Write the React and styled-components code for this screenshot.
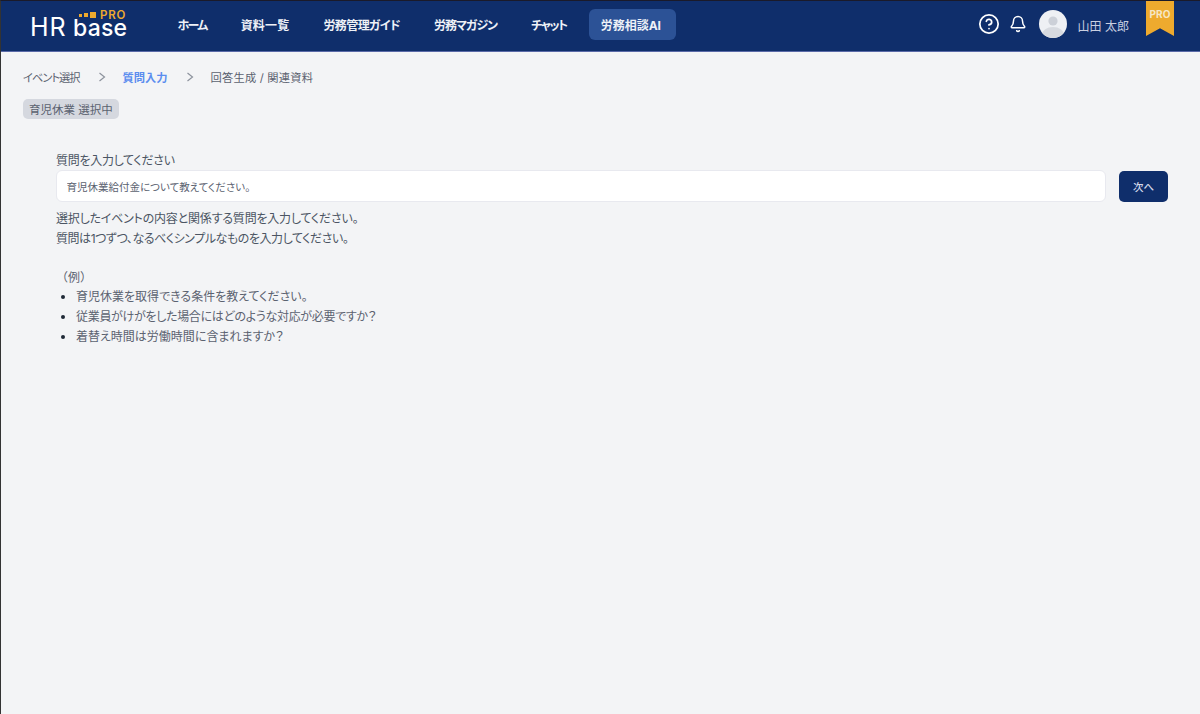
import { useState } from "react";
import styled, { createGlobalStyle } from "styled-components";
import { HelpCircle, Bell } from "lucide-react";

const Global = createGlobalStyle`
  html, body {
    margin: 0;
    padding: 0;
    background: #f3f4f6;
  }
  * { box-sizing: border-box; }
`;

const Page = styled.div`
  width: 1200px;
  height: 714px;
  overflow: hidden;
  display: flex;
  flex-direction: column;
  background: #f3f4f6;
  border-top: 1px solid #1a1a2a;
  border-left: 1px solid #333;
  font-family: Inter, "Noto Sans CJK JP", sans-serif;
  font-feature-settings: "palt";
  color: #4b5563;
`;

const Header = styled.header`
  height: 51px;
  flex: none;
  display: flex;
  align-items: center;
  background: #0f2e6b;
  border-bottom: 1px solid #5a6aa8;
  padding: 0 0 4px 29px;
`;

const Logo = styled.div`
  width: 98px;
  height: 34px;
  flex: none;
  margin-right: 38px;
  margin-top: -1px;
`;

const Nav = styled.nav`
  display: flex;
  align-items: center;
  gap: 11px;
`;

const NavItem = styled.a`
  height: 31px;
  padding: 0 ${(p) => (p.$active ? 15 : 11.5)}px 0 11.5px;
  display: flex;
  align-items: center;
  border-radius: 6px;
  font-size: 12px;
  font-weight: 700;
  letter-spacing: ${(p) => p.$tracking}px;
  color: #eef1f7;
  background: ${(p) => (p.$active ? "#2c5296" : "transparent")};
  cursor: pointer;
  white-space: nowrap;
`;

const Right = styled.div`
  margin-left: auto;
  display: flex;
  align-items: center;
  align-self: stretch;
  padding-right: 26px;
`;

const IconSlot = styled.span`
  display: flex;
  color: #fff;
  margin-right: ${(p) => p.$gap}px;
`;

const Avatar = styled.div`
  width: 28px;
  height: 28px;
  border-radius: 50%;
  overflow: hidden;
  flex: none;
  margin-right: 11px;
`;

const UserName = styled.span`
  font-size: 12px;
  color: #c9cfe0;
  margin-right: 17px;
  margin-top: 2px;
  white-space: nowrap;
`;

const Ribbon = styled.div`
  width: 28px;
  height: 35px;
  align-self: flex-start;
  background: #eeaa2e;
  clip-path: polygon(0 0, 100% 0, 100% 100%, 50% 78%, 0 100%);
  color: #f6e7c4;
  font-size: 10px;
  font-weight: 700;
  text-align: center;
  padding-top: 7px;
`;

const Main = styled.main`
  flex: 1;
  padding: 16px 32px 0 22px;
`;

const Steps = styled.ol`
  list-style: none;
  margin: 0;
  padding: 0;
  display: flex;
  align-items: center;
  height: 17px;
`;

const Step = styled.li`
  font-size: 11.25px;
  letter-spacing: ${(p) => p.$tracking || 0}px;
  color: ${(p) => (p.$current ? "#5b8def" : "#5b6270")};
  font-weight: ${(p) => (p.$current ? 700 : 400)};
  white-space: nowrap;
`;

const Chevron = styled.svg`
  width: 8px;
  height: 10px;
  margin: 0 17px 0 18px;
  color: #8c929c;
  flex: none;
`;

const Chip = styled.span`
  display: inline-flex;
  align-items: center;
  height: 20px;
  margin-top: 14px;
  padding: 0 6px;
  border-radius: 5px;
  background: #d5d8df;
  color: #5b6270;
  font-size: 11.5px;
  white-space: nowrap;
`;

const Form = styled.section`
  margin: 34px 0 0 33px;
`;

const Label = styled.label`
  display: block;
  font-size: 12px;
  line-height: 16px;
  letter-spacing: -0.3px;
  color: #4b5563;
  margin-bottom: 1px;
`;

const InputRow = styled.div`
  display: flex;
  align-items: center;
  gap: 13px;
`;

const Input = styled.input`
  flex: 1;
  height: 32px;
  padding: 0 9.5px;
  background: #fff;
  border: 1px solid #e8e9ef;
  border-radius: 6px;
  font-family: inherit;
  font-feature-settings: inherit;
  font-size: 10.5px;
  color: #5b6270;
  outline: none;
`;

const NextButton = styled.button`
  width: 49px;
  height: 31px;
  border: none;
  border-radius: 5px;
  background: #0f2e6b;
  color: #d5daea;
  font-family: inherit;
  font-size: 10.5px;
  font-weight: 500;
  cursor: pointer;
`;

const Hint = styled.div`
  margin-top: 7px;
`;

const HintLine = styled.p`
  margin: 0;
  font-size: 12px;
  line-height: 20px;
  letter-spacing: ${(p) => p.$tracking}px;
  color: #4b5563;
`;

const ExampleTitle = styled.div`
  margin-top: 19px;
  font-size: 12px;
  line-height: 20px;
  font-feature-settings: normal;
  color: #5b6270;
`;

const Examples = styled.ul`
  margin: -1px 0 0;
  padding: 0 0 0 20px;
  font-size: 12px;
  line-height: 20px;
  color: #5b6270;

  li::marker {
    color: #1f2937;
  }

  li:nth-child(2) {
    letter-spacing: -0.3px;
  }
`;

function HrBaseLogo() {
  return (
    <svg width="98" height="34" viewBox="0 -4 98 34">
      <rect x="49" y="3" width="3" height="3" fill="#eeaa2e" />
      <rect x="54" y="2" width="4" height="4" fill="#eeaa2e" />
      <rect x="60" y="1" width="6" height="6" fill="#eeaa2e" />
      <text x="70" y="7.5" fontFamily="Inter, sans-serif" fontSize="11.5" fontWeight="600" fill="#eeaa2e" letterSpacing="0.8">
        PRO
      </text>
      <text x="0" y="25" fontFamily="Inter, sans-serif" fontSize="25" fontWeight="400" fill="#fff" letterSpacing="1">
        HR
      </text>
      <text x="43" y="25" fontFamily="Inter, sans-serif" fontSize="23" fontWeight="500" fill="#fff" letterSpacing="0.2">
        base
      </text>
    </svg>
  );
}

function UserAvatar() {
  return (
    <svg width="28" height="28" viewBox="0 0 28 28">
      <rect width="28" height="28" fill="#eef0f4" />
      <circle cx="14" cy="11" r="4.6" fill="#ccd0d8" />
      <ellipse cx="14" cy="25" rx="11" ry="8" fill="#d7dae0" />
    </svg>
  );
}

// tracking squeezes the katakana-heavy labels to the reference widths
const navItems = [
  { label: "ホーム", tracking: -1.7 },
  { label: "資料一覧", tracking: 0.2 },
  { label: "労務管理ガイド", tracking: -0.6 },
  { label: "労務マガジン", tracking: -1 },
  { label: "チャット", tracking: -1.5 },
  { label: "労務相談AI", tracking: 0, active: true },
];

export default function App() {
  const [question, setQuestion] = useState("育児休業給付金について教えてください。");

  return (
    <Page>
      <Global />
      <Header>
        <Logo>
          <HrBaseLogo />
        </Logo>
        <Nav>
          {navItems.map((item) => (
            <NavItem key={item.label} $active={item.active} $tracking={item.tracking}>
              {item.label}
            </NavItem>
          ))}
        </Nav>
        <Right>
          <IconSlot $gap={9}>
            <HelpCircle size={22} strokeWidth={1.9} />
          </IconSlot>
          <IconSlot $gap={12}>
            <Bell size={18} strokeWidth={2} />
          </IconSlot>
          <Avatar>
            <UserAvatar />
          </Avatar>
          <UserName>山田 太郎</UserName>
          <Ribbon>PRO</Ribbon>
        </Right>
      </Header>
      <Main>
        <Steps>
          <Step $tracking={-1}>イベント選択</Step>
          <Chevron viewBox="0 0 8 10" fill="none" stroke="currentColor" strokeWidth="1.2">
            <path d="M1.5 1l5 4-5 4" />
          </Chevron>
          <Step $current>質問入力</Step>
          <Chevron viewBox="0 0 8 10" fill="none" stroke="currentColor" strokeWidth="1.2">
            <path d="M1.5 1l5 4-5 4" />
          </Chevron>
          <Step $tracking={0.2}>回答生成 / 関連資料</Step>
        </Steps>
        <Chip>育児休業 選択中</Chip>
        <Form>
          <Label htmlFor="question">質問を入力してください</Label>
          <InputRow>
            <Input id="question" value={question} onChange={(e) => setQuestion(e.target.value)} />
            <NextButton type="button">次へ</NextButton>
          </InputRow>
          <Hint>
            <HintLine $tracking={-0.2}>選択したイベントの内容と関係する質問を入力してください。</HintLine>
            <HintLine $tracking={-0.45}>質問は1つずつ、なるべくシンプルなものを入力してください。</HintLine>
          </Hint>
          <ExampleTitle>（例）</ExampleTitle>
          <Examples>
            <li>育児休業を取得できる条件を教えてください。</li>
            <li>従業員がけがをした場合にはどのような対応が必要ですか？</li>
            <li>着替え時間は労働時間に含まれますか？</li>
          </Examples>
        </Form>
      </Main>
    </Page>
  );
}
